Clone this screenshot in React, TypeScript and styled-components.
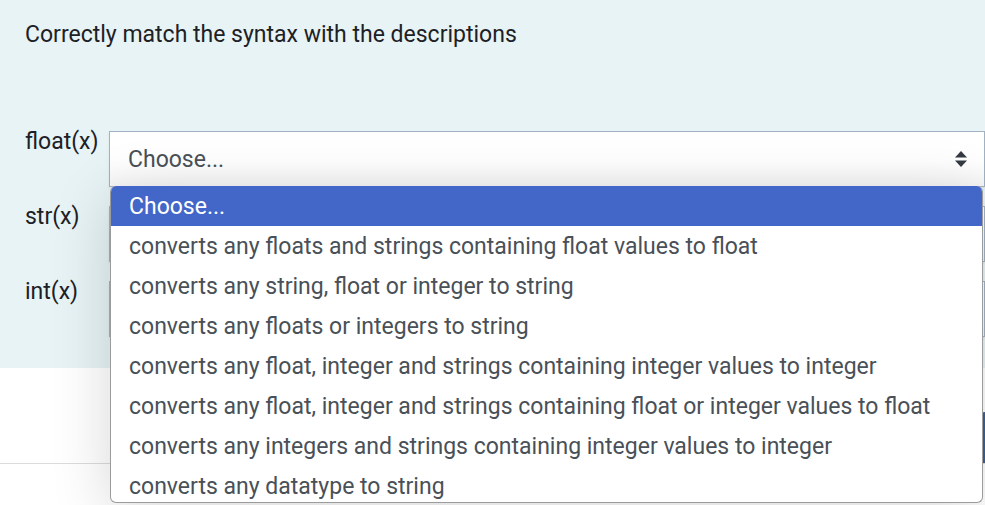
import React from "react";
import styled, { createGlobalStyle } from "styled-components";

const GlobalStyle = createGlobalStyle`
  html, body {
    margin: 0;
    padding: 0;
    background: #ffffff;
    overflow: hidden;
  }
  body {
    font-family: Roboto, "Liberation Sans", sans-serif;
    color: #1d2125;
  }
`;

const Page = styled.div`
  width: 985px;
  height: 505px;
  overflow: hidden;
`;

const Formulation = styled.div`
  background: #e7f3f5;
  padding: 20px 0 31px 25px;
`;

const Prompt = styled.div`
  font-size: 23px;
  line-height: 30px;
  margin-bottom: 78px;
`;

const Rows = styled.div`
  display: flex;
  flex-direction: column;
  gap: 16px;
`;

const Row = styled.div`
  display: flex;
  align-items: flex-start;
  position: relative;
`;

const Label = styled.div`
  width: 84px;
  padding-top: 2px;
  font-size: 23px;
  line-height: 24px;
  flex: none;
`;

const SelectBox = styled.div`
  position: relative;
  flex: 1;
  height: 56px;
  margin-top: 3px;
  box-sizing: border-box;
  border: 1px solid #9fb2c6;
  border-bottom-color: #a9b0b8;
  background: linear-gradient(#ffffff 55%, #f6f6f6);
  box-shadow: 0 2px 3px rgba(0, 0, 0, 0.06);
  display: flex;
  align-items: center;
  padding: 0 18px 0 18px;
  font-size: 23px;
  color: #495057;
`;

const Value = styled.span`
  flex: 1;
`;

const Arrows = styled.svg`
  width: 14px;
  height: 18px;
  margin-right: -2px;
`;

const Listbox = styled.ul`
  position: absolute;
  top: 100%;
  left: 0;
  right: 1px;
  height: 316px;
  margin: 0;
  padding: 0;
  list-style: none;
  background: #ffffff;
  border: 1px solid #9c9c9c;
  border-top: none;
  border-radius: 6px;
  box-shadow: 0 10px 60px rgba(0, 0, 0, 0.16);
  overflow: hidden;
  z-index: 10;
`;

const Option = styled.li<{ $active?: boolean }>`
  height: 38px;
  padding-top: 2px;
  line-height: 38px;
  padding-left: 18px;
  font-size: 23px;
  white-space: nowrap;
  color: ${(p) => (p.$active ? "#ffffff" : "#495057")};
  background: ${(p) => (p.$active ? "#4366c9" : "transparent")};
`;

const Footer = styled.div`
  height: 96px;
  box-sizing: border-box;
  border-bottom: 1px solid #dcdcdc;
  display: flex;
  justify-content: flex-end;
  align-items: flex-end;
`;

const NextButton = styled.div`
  width: 120px;
  height: 51px;
  margin-right: -116px;
  background: #3c6192;
  border-radius: 4px 0 0 0;
`;

const options = [
  "converts any floats and strings containing float values to float",
  "converts any string, float or integer to string",
  "converts any floats or integers to string",
  "converts any float, integer and strings containing integer values to integer",
  "converts any float, integer and strings containing float or integer values to float",
  "converts any integers and strings containing integer values to integer",
  "converts any datatype to string",
];

const labels = ["float(x)", "str(x)", "int(x)"];

function ArrowIcon() {
  return (
    <Arrows viewBox="0 0 14 18">
      <path d="M7 1 L13 7.5 L1 7.5 Z" fill="#343a40" />
      <path d="M1 10.5 L13 10.5 L7 17 Z" fill="#343a40" />
    </Arrows>
  );
}

export default function App() {
  return (
    <Page>
      <GlobalStyle />
      <Formulation>
        <Prompt>Correctly match the syntax with the descriptions</Prompt>
        <Rows>
          {labels.map((label, i) => (
            <Row key={label}>
              <Label>{label}</Label>
              <SelectBox>
                <Value>Choose...</Value>
                <ArrowIcon />
                {i === 0 && (
                  <Listbox>
                    <Option $active>Choose...</Option>
                    {options.map((o) => (
                      <Option key={o}>{o}</Option>
                    ))}
                  </Listbox>
                )}
              </SelectBox>
            </Row>
          ))}
        </Rows>
      </Formulation>
      <Footer>
        <NextButton />
      </Footer>
    </Page>
  );
}
